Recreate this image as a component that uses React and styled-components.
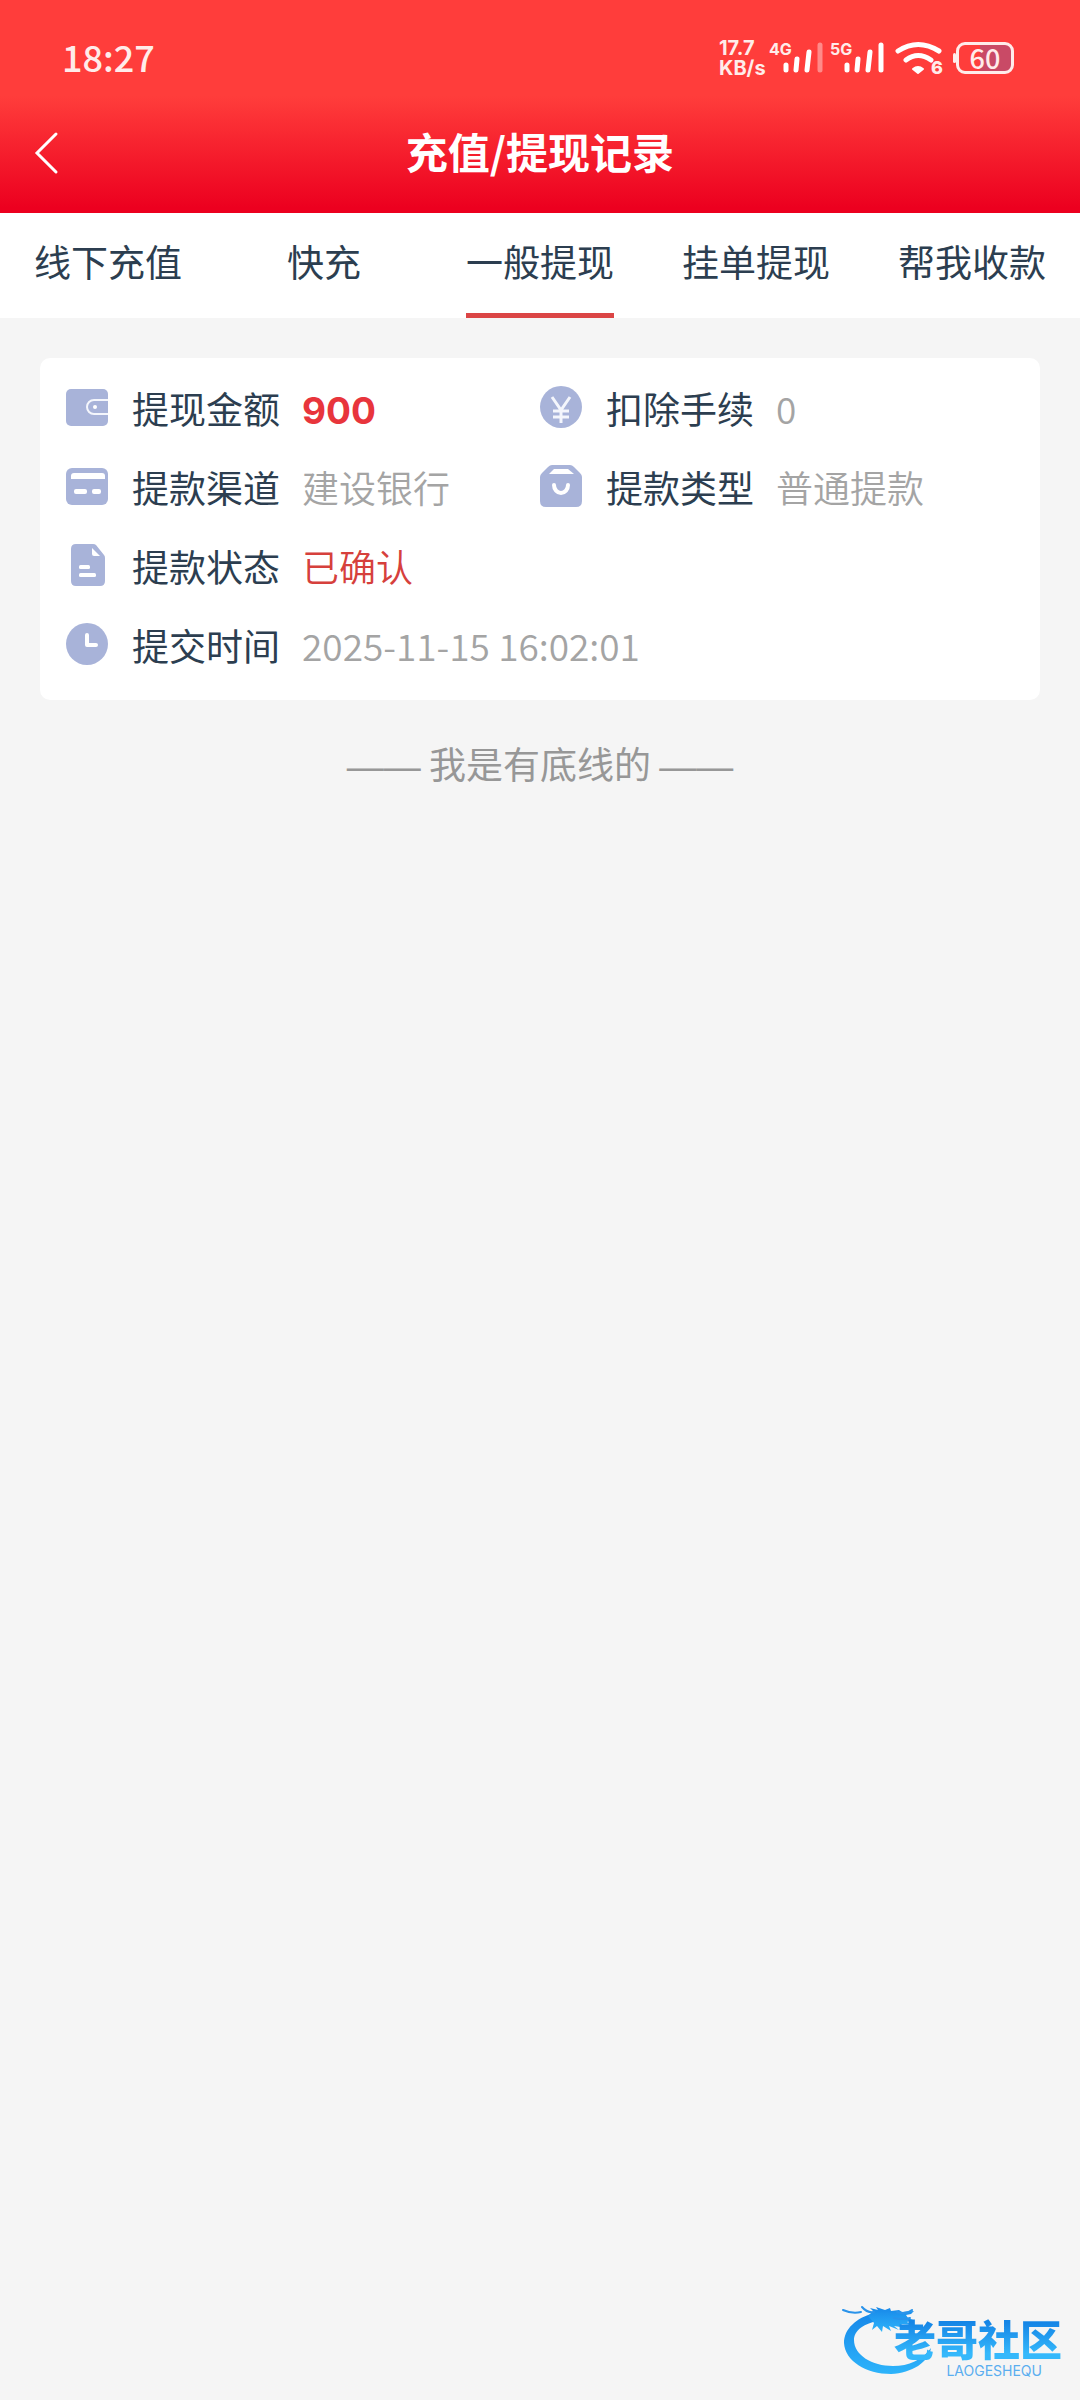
import React, { useState } from 'react';
import styled, { createGlobalStyle } from 'styled-components';

const GlobalStyle = createGlobalStyle`
  * {
    box-sizing: border-box;
  }

  body {
    margin: 0;
    background-color: #f5f5f5;
    color: #2c3e50;
    font-family: "Noto Sans CJK SC", "Noto Sans", sans-serif;
    font-size: 37px;
    line-height: 48px;
  }

  button {
    border: none;
    background: none;
    padding: 0;
    color: inherit;
    font: inherit;
    cursor: pointer;
  }
`

const Page = styled.div`
  display: flex;
  flex-direction: column;
  min-height: 100vh;
`

const TopArea = styled.header`
  background: linear-gradient(#ff3d3b 0, #ff3d3b 96px, #ec001f 208px);
  color: #fff;
`

const StatusBar = styled.div`
  display: flex;
  align-items: center;
  justify-content: space-between;
  height: 92px;
  padding: 24px 66px 0 62px;
  color: #ffecea;
`

const Clock = styled.time`
  padding-bottom: 4px;
  font-size: 36px;
  font-weight: 500;
`

const StatusIcons = styled.div`
  display: flex;
  align-items: center;
  font-family: Inter, sans-serif;
`

const NetSpeed = styled.div`
  display: flex;
  flex-direction: column;
  width: 50px;
  font-size: 20px;
  font-weight: 700;
  line-height: 20px;
`

const Signal = styled.div`
  display: flex;
  align-items: flex-start;
  width: 61px;
  height: 34px;
`

const SignalLabel = styled.span`
  width: 13px;
  font-size: 16px;
  font-weight: 700;
  line-height: 16px;
  white-space: nowrap;
`

const Wifi = styled.div`
  display: flex;
  align-items: flex-end;
  width: 62px;
  height: 34px;
  padding-left: 4px;
`

const WifiBadge = styled.span`
  margin-left: -11px;
  font-size: 18px;
  font-weight: 800;
  line-height: 14px;
`

const Battery = styled.div`
  display: flex;
  align-items: center;

  &::before {
    content: '';
    width: 3px;
    height: 10px;
    border-radius: 2px;
    background-color: currentColor;
  }
`

const BatteryBody = styled.div`
  display: flex;
  align-items: center;
  justify-content: center;
  width: 58px;
  height: 32px;
  border: 3px solid currentColor;
  border-radius: 9px;
  background: linear-gradient(to left, #c94a66 60%, transparent 60%);
  font-family: "Noto Sans CJK SC", sans-serif;
  font-size: 27px;
  font-weight: 500;
  line-height: 26px;
`

const TitleBar = styled.div`
  display: grid;
  grid-template-columns: 96px 1fr 96px;
  align-items: center;
  height: 121px;
`

const BackButton = styled.button`
  display: flex;
  padding-left: 33px;
`

const Title = styled.h1`
  margin: 0;
  padding-bottom: 4px;
  font-size: 42px;
  font-weight: 700;
  line-height: 56px;
  text-align: center;
`

const TabList = styled.nav`
  display: flex;
  background-color: #fff;
`

const Tab = styled.button`
  display: flex;
  flex: 1;
  justify-content: center;
`

const TabText = styled.span`
  height: 105px;
  padding-top: 24px;
  border-bottom: 5px solid ${props => props.$active ? '#db4545' : 'transparent'};
  white-space: nowrap;
`

const Content = styled.main`
  padding: 40px;
`

const Card = styled.dl`
  display: grid;
  grid-template-columns: 1fr 1fr;
  margin: 0;
  padding: 12px 26px 14px;
  border-radius: 10px;
  background-color: #fff;
`

const Field = styled.div`
  display: flex;
  align-items: center;
  grid-column: ${props => props.$wide ? '1 / -1' : 'auto'};
  height: 79px;
  padding-bottom: 4px;

  svg {
    flex: none;
    margin: 0 24px 2px 0;
  }
`

const FieldLabel = styled.dt`
  margin-right: 22px;
  white-space: nowrap;
`

const FieldValue = styled.dd`
  margin: 0;
  padding-top: ${props => props.$strong ? 6 : 0}px;
  color: ${props => props.$color || '#a4a4a4'};
  font-weight: ${props => props.$strong ? 700 : 350};
  font-family: ${props => props.$strong ? 'Inter, sans-serif' : 'inherit'};
  white-space: nowrap;
`

const EndLine = styled.p`
  margin: 39px 0 0;
  color: #979797;
  text-align: center;
`

const Dash = styled.span`
  font-family: "Liberation Sans", sans-serif;
`

const Watermark = styled.footer`
  display: flex;
  align-self: flex-end;
  margin-top: auto;
  padding: 0 18px 22px 0;
`

const WatermarkText = styled.div`
  display: flex;
  flex-direction: column;
  margin: 8px 0 0 -40px;
  text-align: right;
`

const WatermarkName = styled.div`
  background: linear-gradient(#1585e6 20%, #35b8fb 80%);
  background-clip: text;
  color: transparent;
  font-size: 42px;
  font-weight: 900;
  line-height: 52px;
`

const WatermarkLatin = styled.div`
  padding-right: 20px;
  color: #5aaef0;
  font-family: Inter, sans-serif;
  font-size: 14px;
  line-height: 14px;
`

const FieldIcon = ({ children }) => (
  <svg width="42" height="42" viewBox="0 0 42 42" fill="#a8b3d9" aria-hidden="true">
    {children}
  </svg>
)

const WalletIcon = () => (
  <FieldIcon>
    <rect y="3" width="42" height="37" rx="5" />
    <path d="M42 14H28a7 7 0 0 0 0 14h14" fill="none" stroke="#f4f6fc" strokeWidth="2" />
    <circle cx="29" cy="21" r="2" fill="#fff" />
  </FieldIcon>
)

const CardIcon = () => (
  <FieldIcon>
    <rect y="3" width="42" height="37" rx="6" />
    <path d="M5 14v-3q0-3 3-3h28q3 0 3 3v3z" fill="#fff" />
    <rect x="8" y="24" width="13" height="5" rx="2" fill="#fff" />
    <rect x="26" y="24" width="9" height="5" rx="2" fill="#fff" />
  </FieldIcon>
)

const YenIcon = () => (
  <FieldIcon>
    <circle cx="21" cy="21" r="21" />
    <path d="M12 11l9 13 9-13M21 23v14M13 25h16M13 31h16" fill="none" stroke="#f4f6fc" strokeWidth="3" />
  </FieldIcon>
)

const BagIcon = () => (
  <FieldIcon>
    <path d="M12 0h18q2 0 4 2l6 6q2 2 2 4v24q0 6-6 6H6q-6 0-6-6V12q0-2 2-4l6-6q2-2 4-2z" />
    <path d="M14 4h14l6 5H9z" fill="#fff" />
    <path d="M14 20a7 8 0 0 0 14 0" fill="none" stroke="#fff" strokeWidth="4" strokeLinecap="round" />
  </FieldIcon>
)

const DocumentIcon = () => (
  <FieldIcon>
    <path d="M10 0h17q2 0 3 1l8 10q1 1 1 3v23q0 5-5 5H10q-5 0-5-5V5q0-5 5-5z" />
    <path d="M26 4v6q0 2 2 2h6z" fill="#fff" />
    <rect x="13" y="21" width="11" height="4" rx="1.5" fill="#fff" />
    <rect x="13" y="29" width="17" height="4" rx="1.5" fill="#fff" />
  </FieldIcon>
)

const ClockIcon = () => (
  <FieldIcon>
    <circle cx="21" cy="21" r="21" />
    <path d="M21 12v10h9" fill="none" stroke="#fff" strokeWidth="4" strokeLinecap="round" strokeLinejoin="round" />
  </FieldIcon>
)

const SignalBars = ({ weak }) => (
  <svg width="43" height="34" viewBox="0 0 43 34" fill="none" stroke="#fff" strokeWidth="5" strokeLinecap="round" aria-hidden="true">
    <path d="M4 24v5M15 18l-1 11M27 11l-2 18" />
    <path d="M38 4v25" opacity={weak ? 0.4 : 1} />
  </svg>
)

const DragonLogo = () => (
  <svg width="92" height="74" viewBox="0 0 92 74" aria-hidden="true">
    <defs>
      <linearGradient id="dragon" x1="0" y1="0" x2="0" y2="1">
        <stop offset="0" stopColor="#1787e8" />
        <stop offset="1" stopColor="#2db4fb" />
      </linearGradient>
    </defs>
    <g fill="url(#dragon)">
      <path d="M32 9C14 14 2 25 2 39C3 57 24 70 49 70C70 69 87 58 89 44C80 56 67 62 51 62C30 62 12 51 12 36C12 27 21 19 40 16z" />
      <path d="M26 12l5-5-3-3 8 2-2-3 9 3 5-2 1 3 8-1 3 2 12-1-3 3-5 1 2 3 5 2-6 2 5 3-11-1 6 4-13-2 5 4-10-4 2 5-8-5-1 6-5-6-5 4 2-7z" />
    </g>
    <path d="M1 6q9 4 18 2M20 3q5 6 12 5M55 8q9 3 15-2M52 14q9 2 16 0" fill="none" stroke="#2a93ea" strokeWidth="2" strokeLinecap="round" />
  </svg>
)

const tabs = ['线下充值', '快充', '一般提现', '挂单提现', '帮我收款'];

const fields = [
  { label: '提现金额', value: '900', icon: WalletIcon, color: '#e8353c', strong: true },
  { label: '扣除手续', value: '0', icon: YenIcon },
  { label: '提款渠道', value: '建设银行', icon: CardIcon },
  { label: '提款类型', value: '普通提款', icon: BagIcon },
  { label: '提款状态', value: '已确认', icon: DocumentIcon, color: '#d6403c', wide: true },
  { label: '提交时间', value: '2025-11-15 16:02:01', icon: ClockIcon, wide: true },
];

const App = () => {
  const [active, setActive] = useState('一般提现');

  return (
    <Page>
      <GlobalStyle />
      <TopArea>
        <StatusBar>
          <Clock>18:27</Clock>
          <StatusIcons>
            <NetSpeed>
              <span>17.7</span>
              <span>KB/s</span>
            </NetSpeed>
            <Signal>
              <SignalLabel>4G</SignalLabel>
              <SignalBars weak />
            </Signal>
            <Signal>
              <SignalLabel>5G</SignalLabel>
              <SignalBars />
            </Signal>
            <Wifi>
              <svg width="47" height="34" viewBox="0 0 47 34" fill="none" stroke="#fff" strokeWidth="5" strokeLinecap="round" aria-hidden="true">
                <path d="M3 10Q23-3 44 10M11 19q12-9 25 0" />
                <path d="M18 28q5-4 10 0l-5 4z" fill="#fff" strokeWidth="2" strokeLinejoin="round" />
              </svg>
              <WifiBadge>6</WifiBadge>
            </Wifi>
            <Battery>
              <BatteryBody>60</BatteryBody>
            </Battery>
          </StatusIcons>
        </StatusBar>
        <TitleBar>
          <BackButton aria-label="返回">
            <svg width="26" height="44" viewBox="0 0 26 44" fill="none" stroke="#fff" strokeWidth="3" strokeLinecap="round">
              <path d="M23 3L4 22l19 19" />
            </svg>
          </BackButton>
          <Title>充值/提现记录</Title>
        </TitleBar>
      </TopArea>
      <TabList>
        {tabs.map(tab => (
          <Tab key={tab} onClick={() => setActive(tab)}>
            <TabText $active={tab === active}>{tab}</TabText>
          </Tab>
        ))}
      </TabList>
      <Content>
        <Card>
          {fields.map(({ label, value, icon: Icon, color, strong, wide }) => (
            <Field key={label} $wide={wide}>
              <Icon />
              <FieldLabel>{label}</FieldLabel>
              <FieldValue $color={color} $strong={strong}>{value}</FieldValue>
            </Field>
          ))}
        </Card>
        <EndLine><Dash>——</Dash> 我是有底线的 <Dash>——</Dash></EndLine>
      </Content>
      <Watermark>
        <DragonLogo />
        <WatermarkText>
          <WatermarkName>老哥社区</WatermarkName>
          <WatermarkLatin>LAOGESHEQU</WatermarkLatin>
        </WatermarkText>
      </Watermark>
    </Page>
  )
}

export default App;
